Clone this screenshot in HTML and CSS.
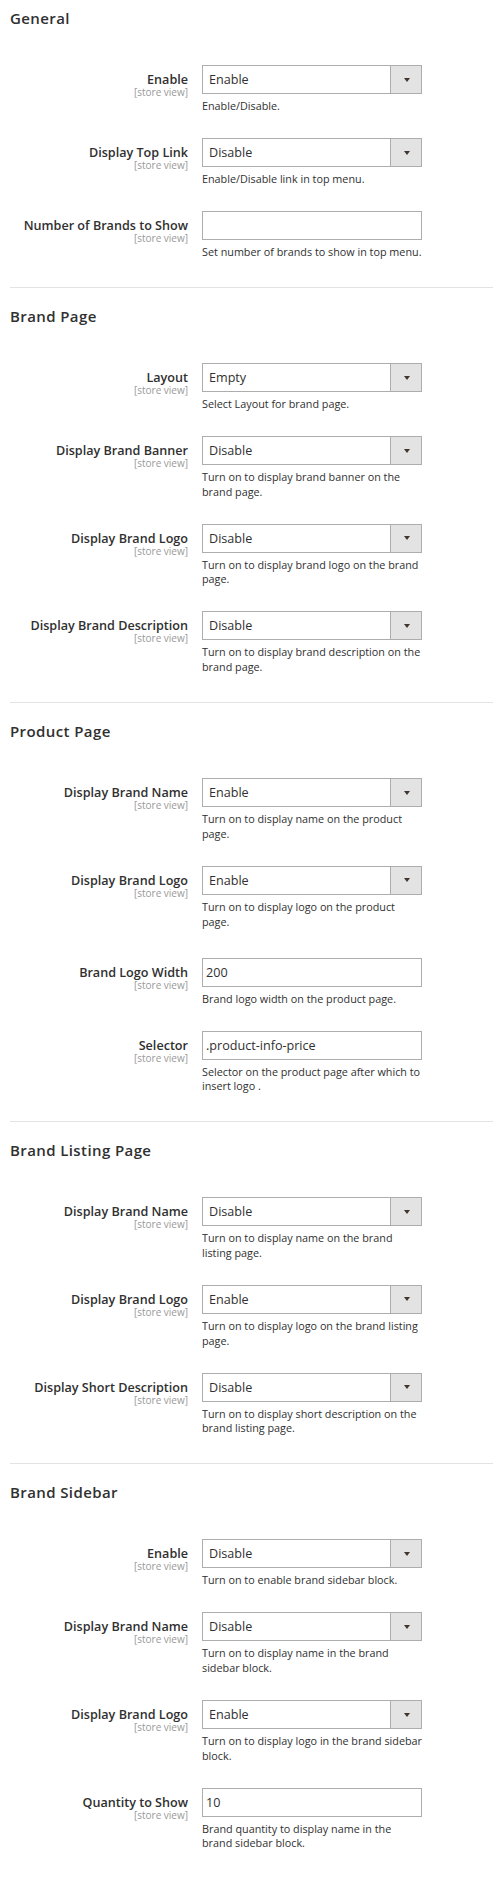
FILE: index.html
```html
<!DOCTYPE html>
<html>
<head>
<meta charset="utf-8">
<link rel="stylesheet" href="styles.css">
</head>
<body>
<div class="page">

<section class="section first">
  <h2 class="title">General</h2>
  <div class="row">
    <div class="label"><div class="label-text">Enable</div><div class="scope">[store view]</div></div>
    <div class="control"><div class="select"><span class="value">Enable</span><span class="arrow"><i></i></span></div><div class="note">Enable/Disable.</div></div>
  </div>
  <div class="row">
    <div class="label"><div class="label-text">Display Top Link</div><div class="scope">[store view]</div></div>
    <div class="control"><div class="select"><span class="value">Disable</span><span class="arrow"><i></i></span></div><div class="note">Enable/Disable link in top menu.</div></div>
  </div>
  <div class="row">
    <div class="label"><div class="label-text">Number of Brands to Show</div><div class="scope">[store view]</div></div>
    <div class="control"><div class="input"></div><div class="note">Set number of brands to show in top menu.</div></div>
  </div>
</section>

<section class="section">
  <h2 class="title">Brand Page</h2>
  <div class="row">
    <div class="label"><div class="label-text">Layout</div><div class="scope">[store view]</div></div>
    <div class="control"><div class="select"><span class="value">Empty</span><span class="arrow"><i></i></span></div><div class="note">Select Layout for brand page.</div></div>
  </div>
  <div class="row">
    <div class="label"><div class="label-text">Display Brand Banner</div><div class="scope">[store view]</div></div>
    <div class="control"><div class="select"><span class="value">Disable</span><span class="arrow"><i></i></span></div><div class="note">Turn on to display brand banner on the brand page.</div></div>
  </div>
  <div class="row">
    <div class="label"><div class="label-text">Display Brand Logo</div><div class="scope">[store view]</div></div>
    <div class="control"><div class="select"><span class="value">Disable</span><span class="arrow"><i></i></span></div><div class="note">Turn on to display brand logo on the brand page.</div></div>
  </div>
  <div class="row">
    <div class="label"><div class="label-text">Display Brand Description</div><div class="scope">[store view]</div></div>
    <div class="control"><div class="select"><span class="value">Disable</span><span class="arrow"><i></i></span></div><div class="note">Turn on to display brand description on the brand page.</div></div>
  </div>
</section>

<section class="section">
  <h2 class="title">Product Page</h2>
  <div class="row">
    <div class="label"><div class="label-text">Display Brand Name</div><div class="scope">[store view]</div></div>
    <div class="control"><div class="select"><span class="value">Enable</span><span class="arrow"><i></i></span></div><div class="note">Turn on to display name on the product page.</div></div>
  </div>
  <div class="row row-tall">
    <div class="label"><div class="label-text">Display Brand Logo</div><div class="scope">[store view]</div></div>
    <div class="control"><div class="select"><span class="value">Enable</span><span class="arrow"><i></i></span></div><div class="note">Turn on to display logo on the product page.</div></div>
  </div>
  <div class="row">
    <div class="label"><div class="label-text">Brand Logo Width</div><div class="scope">[store view]</div></div>
    <div class="control"><div class="input">200</div><div class="note">Brand logo width on the product page.</div></div>
  </div>
  <div class="row">
    <div class="label"><div class="label-text">Selector</div><div class="scope">[store view]</div></div>
    <div class="control"><div class="input">.product-info-price</div><div class="note">Selector on the product page after which to insert logo .</div></div>
  </div>
</section>

<section class="section">
  <h2 class="title">Brand Listing Page</h2>
  <div class="row">
    <div class="label"><div class="label-text">Display Brand Name</div><div class="scope">[store view]</div></div>
    <div class="control"><div class="select"><span class="value">Disable</span><span class="arrow"><i></i></span></div><div class="note">Turn on to display name on the brand listing page.</div></div>
  </div>
  <div class="row">
    <div class="label"><div class="label-text">Display Brand Logo</div><div class="scope">[store view]</div></div>
    <div class="control"><div class="select"><span class="value">Enable</span><span class="arrow"><i></i></span></div><div class="note">Turn on to display logo on the brand listing page.</div></div>
  </div>
  <div class="row">
    <div class="label"><div class="label-text">Display Short Description</div><div class="scope">[store view]</div></div>
    <div class="control"><div class="select"><span class="value">Disable</span><span class="arrow"><i></i></span></div><div class="note">Turn on to display short description on the brand listing page.</div></div>
  </div>
</section>

<section class="section">
  <h2 class="title">Brand Sidebar</h2>
  <div class="row">
    <div class="label"><div class="label-text">Enable</div><div class="scope">[store view]</div></div>
    <div class="control"><div class="select"><span class="value">Disable</span><span class="arrow"><i></i></span></div><div class="note">Turn on to enable brand sidebar block.</div></div>
  </div>
  <div class="row">
    <div class="label"><div class="label-text">Display Brand Name</div><div class="scope">[store view]</div></div>
    <div class="control"><div class="select"><span class="value">Disable</span><span class="arrow"><i></i></span></div><div class="note">Turn on to display name in the brand sidebar block.</div></div>
  </div>
  <div class="row">
    <div class="label"><div class="label-text">Display Brand Logo</div><div class="scope">[store view]</div></div>
    <div class="control"><div class="select"><span class="value">Enable</span><span class="arrow"><i></i></span></div><div class="note">Turn on to display logo in the brand sidebar block.</div></div>
  </div>
  <div class="row">
    <div class="label"><div class="label-text">Quantity to Show</div><div class="scope">[store view]</div></div>
    <div class="control"><div class="input">10</div><div class="note">Brand quantity to display name in the brand sidebar block.</div></div>
  </div>
</section>

</div>
</body>
</html>
```

FILE: styles.css
```css
* { box-sizing: border-box; }

html, body {
  margin: 0;
  padding: 0;
  background: #ffffff;
}

body {
  font-family: "Open Sans", "Noto Sans", "Liberation Sans", sans-serif;
  color: #303030;
}

.page {
  margin-left: 10px;
}

.section {
  border-top: 1px solid #e3e3e3;
  padding-top: 18px;
  padding-bottom: 3px;
}

.section.first {
  border-top: none;
  padding-top: 8px;
}

.title {
  margin: 0 0 37px 0;
  font-size: 15px;
  line-height: 20px;
  font-weight: 600;
  letter-spacing: 0.4px;
  color: #303030;
}

.row {
  display: grid;
  grid-template-columns: 178px 220px;
  column-gap: 14px;
  align-items: start;
  margin-bottom: 24.3px;
}

.row-tall {
  margin-bottom: 28.3px;
}

.label {
  text-align: right;
  padding-top: 8px;
}

.label-text {
  font-size: 12.6px;
  line-height: 14px;
  font-weight: 600;
  color: #303030;
}

.scope {
  font-size: 10px;
  line-height: 10px;
  color: #999999;
}

.control {
  width: 220px;
}

.select {
  display: flex;
  height: 29px;
  border: 1px solid #adadad;
  background: #ffffff;
}

.select .value {
  flex: 1;
  padding-left: 6px;
  font-size: 12.6px;
  line-height: 27px;
  color: #303030;
}

.select .arrow {
  width: 31px;
  border-left: 1px solid #adadad;
  background: #e3e3e3;
  display: flex;
  align-items: center;
  justify-content: center;
}

.select .arrow i {
  display: block;
  width: 0;
  height: 0;
  border-left: 3px solid transparent;
  border-right: 3px solid transparent;
  border-top: 4px solid #41362f;
  margin-left: 1px;
}

.input {
  height: 29px;
  border: 1px solid #adadad;
  padding-left: 3px;
  font-size: 12.6px;
  line-height: 27px;
  color: #303030;
}

.note {
  margin-top: 5px;
  font-size: 10.8px;
  line-height: 14.7px;
  color: #303030;
}
```
